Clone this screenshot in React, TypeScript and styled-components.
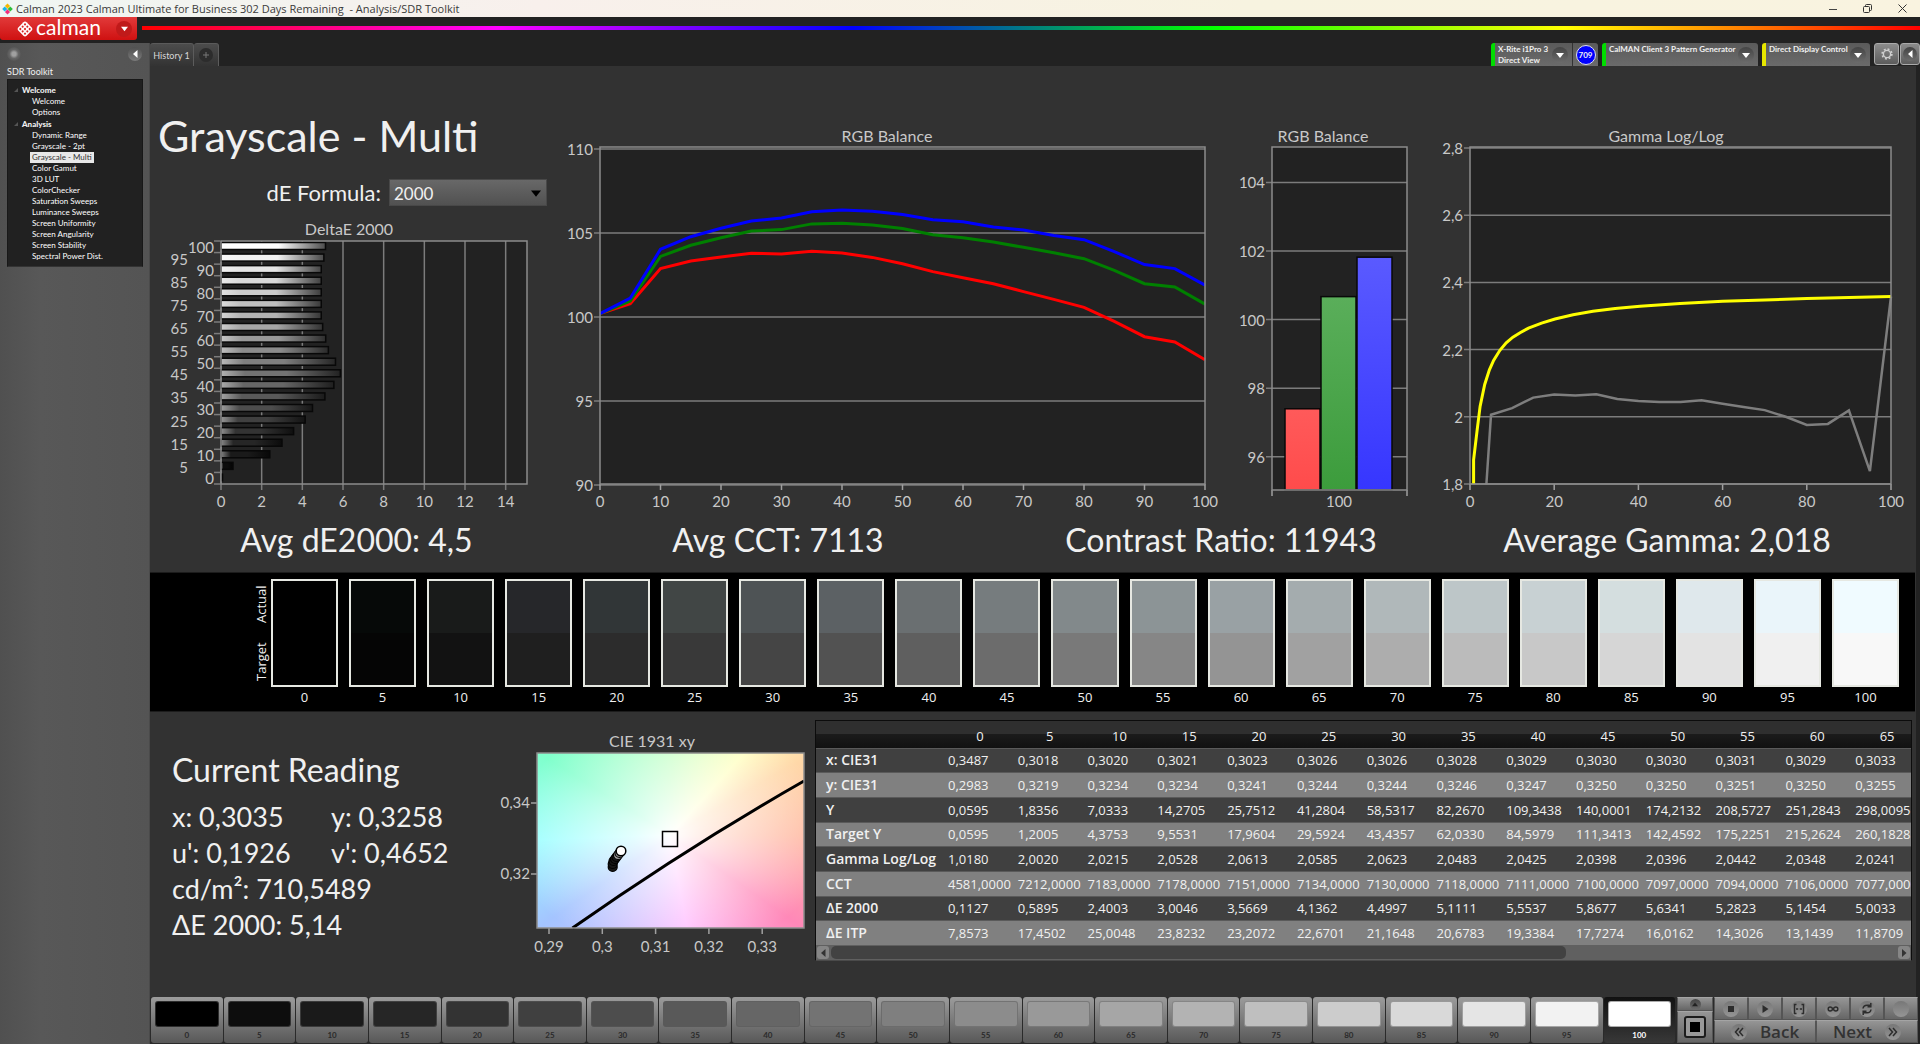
import React, { useState } from "react";
import styled, { createGlobalStyle } from "styled-components";

const HUMANIST = `Lato, "Liberation Sans", sans-serif`;
const SYSTEM = `"Open Sans", "Liberation Sans", sans-serif`;

const GlobalStyle = createGlobalStyle`
  *, *::before, *::after { box-sizing: border-box; }
  body { margin: 0; background: #222; font-family: ${HUMANIST}; color: #f0f0f0; }
  button, select { font: inherit; color: inherit; margin: 0; padding: 0; border: 0; }
`;

/* ---------- data ---------- */

const LEVELS = Array.from({ length: 21 }, (_, i) => i * 5);

const DELTA_E = [
  0.11, 0.59, 2.4, 3.0, 3.57, 4.14, 4.5, 5.11, 5.55, 5.87, 5.63, 5.28, 5.15, 5.0, 4.93, 4.93, 4.93, 4.93,
  4.93, 5.06, 5.14,
];

const BALANCE = {
  red: [
    100.2, 100.79, 102.88, 103.33, 103.57, 103.79, 103.75, 103.91, 103.81, 103.55, 103.17, 102.7, 102.34,
    101.98, 101.51, 101.05, 100.58, 99.74, 98.83, 98.51, 97.46,
  ],
  green: [
    100.2, 100.95, 103.61, 104.27, 104.72, 105.12, 105.2, 105.54, 105.58, 105.48, 105.26, 104.9, 104.72,
    104.46, 104.15, 103.83, 103.47, 102.78, 101.98, 101.79, 100.77,
  ],
  blue: [
    100.2, 101.13, 104.03, 104.78, 105.28, 105.71, 105.89, 106.27, 106.37, 106.29, 106.11, 105.79, 105.67,
    105.36, 105.18, 104.86, 104.6, 103.89, 103.12, 102.88, 101.9,
  ],
};

const GAMMA_TARGET: [number, number][] = [
  [0.85, 1.8], [0.85, 1.872], [1.7, 1.962], [2.4, 2.031], [3.5, 2.096], [4.6, 2.14], [5.6, 2.168],
  [7.1, 2.198], [8.6, 2.22], [10.2, 2.237], [12, 2.251], [13.9, 2.264], [17, 2.279], [20.2, 2.291],
  [24.5, 2.304], [29.2, 2.314], [34.5, 2.322], [40.4, 2.329], [49.9, 2.337], [60, 2.344], [70, 2.348],
  [80, 2.352], [90, 2.355], [100, 2.358],
];

const GAMMA_ACTUAL: [number, number][] = [
  [3.9, 1.8], [5, 2.006], [10, 2.026], [15, 2.057], [20, 2.066], [25, 2.063], [30, 2.067], [35, 2.053],
  [40, 2.047], [45, 2.044], [50, 2.044], [55, 2.049], [60, 2.039], [65, 2.029], [70, 2.02], [75, 2.0],
  [80, 1.976], [85, 1.979], [90, 2.019], [95, 1.838], [100, 2.358],
];

const ACTUAL = [
  "#000000", "#060908", "#191b1a", "#26272a", "#313637", "#414645", "#4e5355", "#5c6164", "#6a6f71",
  "#767c7e", "#82898b", "#8c9496", "#99a1a4", "#a4acae", "#b0b8ba", "#bdc6c8", "#c8d1d3", "#d4dedf",
  "#dfe8ec", "#eaf5fa", "#f0fbff",
];

const TARGET = [
  "#000000", "#050505", "#121212", "#1f1f1f", "#2c2c2c", "#393939", "#454545", "#525252", "#5f5f5f",
  "#6c6c6c", "#797979", "#868686", "#949494", "#a1a1a1", "#adadad", "#bbbbbb", "#c8c8c8", "#d6d6d6",
  "#e3e3e3", "#f0f0f0", "#f8f8f8",
];

const TABLE: [string, string][] = [
  ["x: CIE31", "0,3487 0,3018 0,3020 0,3021 0,3023 0,3026 0,3026 0,3028 0,3029 0,3030 0,3030 0,3031 0,3029 0,3033"],
  ["y: CIE31", "0,2983 0,3219 0,3234 0,3234 0,3241 0,3244 0,3244 0,3246 0,3247 0,3250 0,3250 0,3251 0,3250 0,3255"],
  ["Y", "0,0595 1,8356 7,0333 14,2705 25,7512 41,2804 58,5317 82,2670 109,3438 140,0001 174,2132 208,5727 251,2843 298,0095"],
  ["Target Y", "0,0595 1,2005 4,3753 9,5531 17,9604 29,5924 43,4357 62,0330 84,5979 111,3413 142,4592 175,2251 215,2624 260,1828"],
  ["Gamma Log/Log", "1,0180 2,0020 2,0215 2,0528 2,0613 2,0585 2,0623 2,0483 2,0425 2,0398 2,0396 2,0442 2,0348 2,0241"],
  ["CCT", "4581,0000 7212,0000 7183,0000 7178,0000 7151,0000 7134,0000 7130,0000 7118,0000 7111,0000 7100,0000 7097,0000 7094,0000 7106,0000 7077,0000"],
  ["ΔE 2000", "0,1127 0,5895 2,4003 3,0046 3,5669 4,1362 4,4997 5,1111 5,5537 5,8677 5,6341 5,2823 5,1454 5,0033"],
  ["ΔE ITP", "7,8573 17,4502 25,0048 23,8232 23,2072 22,6701 21,1648 20,6783 19,3384 17,7274 16,0162 14,3026 13,1439 11,8709"],
];

const TREE = [
  { title: "Welcome", items: ["Welcome", "Options"] },
  {
    title: "Analysis",
    items: [
      "Dynamic Range", "Grayscale - 2pt", "Grayscale - Multi", "Color Gamut", "3D LUT", "ColorChecker",
      "Saturation Sweeps", "Luminance Sweeps", "Screen Uniformity", "Screen Angularity",
      "Screen Stability", "Spectral Power Dist.",
    ],
  },
];

/* ---------- shell ---------- */

const Window = styled.div`
  min-height: 100vh;
  display: flex;
  flex-direction: column;
  background: #222;
`;

const TitleBar = styled.div`
  height: 17px;
  display: flex;
  align-items: center;
  padding-left: 2px;
  background: linear-gradient(90deg, #eff6f2 0%, #f8f0ec 28%, #f7f3e0 65%, #f9f3e0 100%);
  color: #3a3a3a;
  font: 11px/16px ${SYSTEM};
`;

const TitleText = styled.span`
  flex: 1;
  padding-left: 3px;
  white-space: pre;
`;

const WindowButton = styled.button`
  width: 35px;
  height: 17px;
  display: grid;
  place-items: center;
  background: none;
`;

const Banner = styled.header`
  height: 26px;
  display: flex;
  align-items: flex-start;
  gap: 5px;
`;

const Brand = styled.button`
  width: 137px;
  height: 23px;
  display: flex;
  align-items: center;
  gap: 2px;
  padding: 0 5px 0 16px;
  border-radius: 0 0 3px 3px;
  background: linear-gradient(#e23a3a, #cf1111);
  color: #fff;
`;

const BrandName = styled.span`
  flex: 1;
  text-align: left;
  font-size: 21px;
  line-height: 20px;
  padding-bottom: 4px;
`;

const Spectrum = styled.div`
  flex: 1;
  height: 4px;
  margin-top: 9px;
  background: linear-gradient(90deg, #f00, #f0f 20%, #00f 40%, #0f0 60%, #ff0 80%, #f00);
`;

const Body = styled.div`
  flex: 1;
  display: flex;
`;

const Round = styled.span<{ $size: number; $tone?: string; $ring?: boolean }>`
  flex: none;
  width: ${(p) => p.$size}px;
  height: ${(p) => p.$size}px;
  border: ${(p) => (p.$ring ? "1px solid #dde" : "0")};
  border-radius: 50%;
  display: grid;
  place-items: center;
  background: ${(p) => p.$tone ?? "linear-gradient(#444, #6c6c6c)"};
`;

/* ---------- sidebar ---------- */

const Sidebar = styled.aside`
  flex: none;
  width: 150px;
  padding: 0 7px;
  background: linear-gradient(90deg, #505050, #585858 40px, #545454);
  border-right: 1px solid #4a4a4a;
`;

const SidebarTop = styled.div`
  display: flex;
  justify-content: space-between;
  align-items: center;
  height: 22px;
`;

const IconButton = styled.button`
  background: none;
  display: grid;
  place-items: center;
`;

const SidebarTitle = styled.h2`
  margin: 0;
  font-size: 9px;
  font-weight: 400;
  line-height: 14px;
`;

const Tree = styled.nav`
  margin-right: -1px;
  padding: 4px 0;
  background: #212121;
  border: 1px solid #181818;
  border-bottom-color: #333;
`;

const Branch = styled.h3`
  margin: 0;
  display: flex;
  align-items: center;
  gap: 3px;
  padding-left: 5px;
  font-size: 8px;
  font-weight: 900;
  line-height: 12px;
`;

const Leaf = styled.a<{ $active: boolean }>`
  display: block;
  width: fit-content;
  margin-left: 22px;
  padding: 0 2px;
  font-size: 8px;
  line-height: 11px;
  text-decoration: none;
  color: ${(p) => (p.$active ? "#333" : "#fff")};
  background: ${(p) => (p.$active ? "#e8e8e8" : "none")};
`;

/* ---------- tabs and devices ---------- */

const Content = styled.div`
  flex: 1;
  min-width: 0;
  display: flex;
  flex-direction: column;
`;

const Toolbar = styled.div`
  height: 23px;
  display: flex;
  justify-content: space-between;
`;

const Tabs = styled.div`
  display: flex;
`;

const Tab = styled.button<{ $width: number }>`
  width: ${(p) => p.$width}px;
  height: 23px;
  display: grid;
  place-items: center;
  background: linear-gradient(#4c4c4c, #333);
  border-top: 1px solid #5a5a5a;
  border-right: 1px solid #5c5c5c;
  border-radius: 3px 3px 0 0;
  font-size: 9px;
  white-space: nowrap;
  color: #d8d8d8;
`;

const Devices = styled.div`
  display: flex;
  gap: 4px;
`;

const Device = styled.div<{ $accent: string; $width: number }>`
  width: ${(p) => p.$width}px;
  height: 23px;
  display: flex;
  border-left: 4px solid ${(p) => p.$accent};
  border-radius: 3px 3px 0 0;
  background: linear-gradient(#5a5a5a, #6b6b6b);
`;

const DeviceMenu = styled.button`
  flex: 1;
  display: flex;
  align-items: center;
  justify-content: space-between;
  padding: 0 4px 0 3px;
  background: none;
  text-align: left;
`;

const DeviceName = styled.span`
  align-self: flex-start;
  padding-top: 1px;
  font-size: 8px;
  font-weight: 700;
  line-height: 11px;
  white-space: pre;
`;

const Gamut = styled.button`
  width: 26px;
  display: grid;
  place-items: center;
  border-left: 1px solid #333;
  background: none;
  font-size: 8px;
  font-weight: 700;
`;

const ToolButtons = styled.div`
  display: flex;
  gap: 1px;
`;

const ToolButton = styled.button<{ $width: number }>`
  width: ${(p) => p.$width}px;
  height: 22px;
  display: grid;
  place-items: center;
  border: 1px solid #aaa;
  border-radius: 3px;
  background: linear-gradient(#8c8c8c, #5c5c5c);
`;

/* ---------- main ---------- */

const Main = styled.main`
  flex: 1;
  display: flex;
  flex-direction: column;
  margin-right: 4px;
  background: #323232;
`;

const Charts = styled.section`
  display: grid;
  grid-template-columns: 420fr 670fr 202fr 474fr;
  align-items: end;
`;

const Heading = styled.h1`
  margin: 0;
  padding: 40px 0 0 8px;
  font-size: 43px;
  font-weight: 400;
  line-height: 60px;
`;

const FormulaRow = styled.div`
  display: flex;
  align-items: center;
  justify-content: flex-end;
  gap: 8px;
  padding: 13px 23px 10px 0;
  font-size: 22px;
  line-height: 27px;
`;

const SelectBox = styled.div`
  display: grid;
  width: 158px;
  height: 27px;
  align-items: center;

  > * { grid-area: 1 / 1; }
  > svg { justify-self: end; margin-right: 6px; pointer-events: none; }
`;

const Select = styled.select`
  appearance: none;
  width: 100%;
  height: 27px;
  padding: 2px 4px 0;
  border: 1px solid #484848;
  background: linear-gradient(#686868, #515151);
  font-size: 17px;
  line-height: 23px;
`;

const Chart = styled.svg`
  display: block;
  width: 100%;
  height: auto;
  overflow: visible;
  font-family: ${HUMANIST};
  font-size: 15px;
  fill: #c8c8c8;
`;

const ChartTitle = styled.text`
  font-size: 16px;
  text-anchor: middle;
`;

const Stats = styled.section`
  display: grid;
  grid-template-columns: 413fr 430fr 456fr 436fr;
  padding: 0 31px 7px 0;
  font-size: 32px;
  line-height: 51px;
  text-align: center;
`;

const Strip = styled.section`
  display: flex;
  height: 140px;
  margin-right: 1px;
  padding: 6px 16px 0 101px;
  background: #000;
  border: solid #1c1c1c;
  border-width: 1px 0;
`;

const StripAxis = styled.div`
  flex: none;
  width: 20px;
  height: 108px;
  display: flex;
  justify-content: space-between;
  padding: 6px 0;
  writing-mode: vertical-rl;
  transform: rotate(180deg);
  font: 13px/20px ${SYSTEM};
`;

const Swatches = styled.div`
  flex: 1;
  display: flex;
  gap: 11px;
`;

const Swatch = styled.figure`
  flex: 1;
  margin: 0;
  text-align: center;
  font: 13px/20px ${SYSTEM};
`;

const SwatchColor = styled.div<{ $top: string; $bottom: string }>`
  height: 108px;
  border: 2px solid #e6e8e2;
  background: linear-gradient(${(p) => p.$top} 50%, ${(p) => p.$bottom} 50%);
`;

const Lower = styled.section`
  display: grid;
  grid-template-columns: minmax(0, 351fr) minmax(0, 311fr) minmax(0, 1104fr);
  align-items: start;
`;

const Reading = styled.div`
  padding: 37px 0 0 22px;
`;

const ReadingTitle = styled.h2`
  margin: 0;
  font-size: 32px;
  font-weight: 400;
  line-height: 42px;
`;

const ReadingGrid = styled.div`
  display: grid;
  grid-template-columns: 159px auto;
  padding-top: 8px;
  font-size: 27px;
  line-height: 36px;
  white-space: nowrap;
`;

const ChartSlot = styled.div`
  padding-top: 17px;
`;

const PlaneFill = styled.div`
  width: 100%;
  height: 100%;
  background:
    radial-gradient(ellipse 160px 120px at 50% 47%, #fff, rgba(255, 255, 255, 0.75) 22%, rgba(255, 255, 255, 0) 100%),
    conic-gradient(
      from 0deg at 50% 47%,
      #c4ffc4 0deg, #ffffc0 42deg, #ffd8a8 60deg, #ffb8a0 90deg, #ff88b8 125deg, #ffbcff 170deg,
      #a4c4ff 235deg, #98ffff 268deg, #80ffcc 302deg, #c4ffc4 360deg
    );
`;

const TablePanel = styled.div`
  margin: 8px 4px 0 3px;
  border: 1px solid #0c0c0c;
  border-bottom-color: #4a4a4a;
`;

const TableScroll = styled.div`
  overflow: hidden;
`;

const DataTable = styled.table`
  width: 1106px;
  table-layout: fixed;
  border-collapse: collapse;
  font: 13px/24px ${SYSTEM};
  text-align: left;
  white-space: nowrap;

  th, td { padding: 0 0 0 3px; }
  thead tr { height: 27px; }
  thead th {
    padding: 2px 0 0;
    text-align: center;
    font-weight: 400;
  }
  thead th:first-child { width: 129px; }
  thead { background: linear-gradient(#2f2f2f 50%, #1b1b1b 50%, #111); }
  tbody th { padding-left: 10px; font-size: 14px; font-weight: 600; }
  tbody tr { height: 25px; background: #404040; box-shadow: inset 0 1px #5a5a5a; }
  tbody tr:nth-child(3n + 1) { height: 24px; }
  tbody tr:nth-child(even) { background: #808080; }
`;

const ScrollBar = styled.div`
  height: 15px;
  display: flex;
  align-items: center;
  justify-content: space-between;
  gap: 2px;
  padding: 1px;
  background: #606060;
`;

const ScrollTrack = styled.div`
  flex: 1;
  height: 13px;
`;

const ScrollThumb = styled.div`
  width: 69%;
  height: 13px;
  border-radius: 5px;
  background: #424242;
`;

const ScrollButton = styled.button`
  width: 12px;
  height: 13px;
  display: grid;
  place-items: center;
  border-radius: 3px;
  background: #868686;
`;

/* ---------- bottom bar ---------- */

const BottomBar = styled.footer`
  display: flex;
  height: 47px;
  margin-top: auto;
  margin-right: -2px;
  background: #2a2a2a;
`;

const Patches = styled.div`
  flex: 1;
  display: flex;
  gap: 1px;
  padding: 0 2px 1px 1px;
`;

const Patch = styled.button<{ $active: boolean }>`
  flex: 1;
  display: flex;
  flex-direction: column;
  padding: 4px 4px 0;
  border-radius: 3px;
  background: ${(p) => (p.$active ? "linear-gradient(#111, #383838)" : "linear-gradient(#9c9c9c, #585858)")};
  color: ${(p) => (p.$active ? "#fff" : "#2a2a2a")};
  font-size: 8px;
  font-weight: 700;
  line-height: 16px;
  text-align: center;
`;

const PatchColor = styled.span<{ $color: string }>`
  width: 100%;
  height: 28px;
  border: 1px solid rgba(90, 90, 90, 0.5);
  border-radius: 3px;
  background: ${(p) => p.$color};
`;

const PatchLabel = styled.span`
  width: 100%;
`;

const StackColumn = styled.div`
  width: 36px;
  margin-right: 1px;
  padding-bottom: 1px;
  display: flex;
  flex-direction: column;
`;

const BarButton = styled.button<{ $height: number }>`
  flex: 1 1 0;
  height: ${(p) => p.$height}px;
  flex-basis: ${(p) => p.$height}px;
  display: flex;
  align-items: center;
  justify-content: center;
  gap: 13px;
  border: 1px solid #555;
  border-top-color: #a4a4a4;
  background: linear-gradient(#959595, #666);
  color: #333;
  font: 600 17px/21px ${SYSTEM};
`;

const Transport = styled.div`
  width: 204px;
  padding-bottom: 1px;
  display: flex;
  flex-direction: column;
`;

const TransportRow = styled.div`
  flex: 1;
  display: flex;
`;

/* ---------- small drawings ---------- */

const Caret = ({ dir = "down", size = 8, color = "#fff" }: { dir?: "down" | "up" | "left" | "right"; size?: number; color?: string }) => {
  const d = { down: "M0 2h8L4 7z", up: "M0 7h8L4 2z", left: "M6.500 0v8L2 4z", right: "M2 0v8l4.500-4z" }[dir];
  return (
    <svg width={size} height={size} viewBox="0 0 8 8" aria-hidden="true">
      <path d={d} fill={color} />
    </svg>
  );
};

const AppIcon = () => (
  <svg width="11" height="12" viewBox="0 0 12 12" aria-hidden="true">
    <path d="M6 0l2.800 2.800L6 5.600 3.200 2.800z" fill="#f5b800" />
    <path d="M3 3.200L5.800 6 3 8.800.2 6z" fill="#19b5e8" />
    <path d="M9 3.200L11.800 6 9 8.800 6.200 6z" fill="#2dbf3a" />
    <path d="M6 6.400l2.800 2.800L6 12 3.200 9.200z" fill="#ee2f7b" />
  </svg>
);

const BrandMark = () => {
  const dots = [-1, 0, 1].flatMap((a) => [-1, 0, 1].map((b) => [10 + (a - b) * 2.6, 10 + (a + b) * 2.6]));
  return (
    <svg width="18" height="20" viewBox="0 0 20 20" aria-hidden="true">
      <rect x="3.500" y="3.500" width="13" height="13" rx="2.500" transform="rotate(45 10 10)" fill="#fff" />
      {dots.map(([x, y]) => (
        <rect key={`${x}-${y}`} x={x - 1.1} y={y - 1.1} width="2.200" height="2.200" rx=".8" transform={`rotate(45 ${x} ${y})`} fill="#d92525" />
      ))}
    </svg>
  );
};

const Gear = () => (
  <svg width="14" height="14" viewBox="0 0 14 14" fill="none" stroke="#d0d0d0" aria-hidden="true">
    <circle cx="7" cy="7" r="3.600" strokeWidth="1.400" />
    <circle cx="7" cy="7" r="4.900" strokeWidth="1.600" strokeDasharray="1.900 1.950" />
  </svg>
);

const Glyph = ({ kind }: { kind: string }) => (
  <svg width="12" height="12" viewBox="0 0 12 12" fill="none" stroke="#2c2c2c" strokeWidth="1.500" aria-hidden="true">
    {kind === "Stop" && <rect x="3" y="3" width="6" height="6" fill="#2c2c2c" stroke="none" />}
    {kind === "Play" && <path d="M3.500 2l6 4-6 4z" fill="#2c2c2c" stroke="none" />}
    {kind === "Read series" && <path d="M3.500 1.500h-2v9h2M8.500 1.500h2v9h-2M3 6h2.200M6.800 6H9" />}
    {kind === "Continuous" && <path d="M6 6C5 4.500 4.200 4 3.200 4a2 2 0 000 4C4.200 8 5 7.500 6 6s1.800-2 2.800-2a2 2 0 010 4C7.800 8 7 7.500 6 6z" />}
    {kind === "Refresh" && <path d="M2 5.500C2.300 3.500 4 2.200 6 2.200h3M9.800 0v3.800H6.500M10 6.500c-.3 2-2 3.300-4 3.300H3M2.200 12V8.200h3.300" />}
    {kind === "Back" && <path d="M6 2L2.500 6 6 10M10 2L6.500 6 10 10" />}
    {kind === "Next" && <path d="M2 2l3.500 4L2 10M6 2l3.500 4L6 10" />}
  </svg>
);

/* ---------- charts ---------- */

const GRID = "#7c7c7c";

const line = (points: [number, number][]) => points.map(([x, y]) => `${x.toFixed(1)},${y.toFixed(1)}`).join(" ");

const DeltaChart = () => {
  const left = 71;
  const top = 25;
  const step = 243 / 21;
  const unit = 305 / 15;
  return (
    <Chart viewBox="0 0 420 298" role="img" aria-label="DeltaE 2000">
      <defs>
        {LEVELS.map((l) => {
          const c = l * 2.55;
          const g = (v: number) => `rgb(${[v, v, v].map(Math.round).join(",")})`;
          return (
            <linearGradient id={`bar${l}`} key={l}>
              <stop offset="0" stopColor={g(c + (255 - c) * 0.45)} />
              <stop offset=".2" stopColor={g(c)} />
              <stop offset=".55" stopColor={g(c)} />
              <stop offset="1" stopColor={g(c * 0.3)} />
            </linearGradient>
          );
        })}
      </defs>
      <ChartTitle x="199" y="19">DeltaE 2000</ChartTitle>
      <rect x={left} y={top} width="306" height="243" fill="#222" />
      {[0, 2, 4, 6, 8, 10, 12, 14].map((v) => (
        <g key={v}>
          <path d={`M${left + v * unit} ${top}V${top + 249}`} stroke={GRID} strokeWidth="1.500" />
          <text x={left + v * unit} y="291" textAnchor="middle">{v}</text>
        </g>
      ))}
      {LEVELS.map((l, i) => {
        const y = top + (20 - i) * step;
        const w = DELTA_E[i] * unit;
        return (
          <g key={l}>
            <path d={`M${left - 7} ${y}h6`} stroke={GRID} strokeWidth="1.500" />
            {w > 4 && <rect x={left} y={y + 1.5} width={w} height="7" fill={`url(#bar${l})`} stroke="#080808" strokeWidth="1.500" />}
            {w <= 4 && <rect x={left} y={y + 1} width={w} height="8" fill="#080808" />}
            <text x={l % 10 ? 38 : 64} y={y + 12} textAnchor="end">{l}</text>
          </g>
        );
      })}
      <path d={`M${left - 7} ${top + 243}h6`} stroke={GRID} strokeWidth="1.500" />
      <rect x={left} y={top} width="306" height="243" fill="none" stroke="#8c8c8c" strokeWidth="1.500" />
    </Chart>
  );
};

interface PlotProps {
  width: number;
  title: string;
  titleX: number;
  left: number;
  right: number;
  bottom: number;
  rows: { y: number; label: string }[];
  cols: { x: number; label: string }[];
  ticks: number[];
  children: React.ReactNode;
}

const Plot = ({ width, title, titleX, left, right, bottom, rows, cols, ticks, children }: PlotProps) => (
  <Chart viewBox={`0 0 ${width} 388`} role="img" aria-label={title}>
    <ChartTitle x={titleX} y="16">{title}</ChartTitle>
    <rect x={left} y="21" width={right - left} height={bottom - 21} fill="#222" />
    {rows.map((r) => (
      <g key={r.label}>
        <path d={`M${left - 6} ${r.y}H${right}`} stroke={GRID} strokeWidth="1.500" />
        <text x={left - 7} y={r.y + 6} textAnchor="end">{r.label}</text>
      </g>
    ))}
    {ticks.map((x) => (
      <path key={x} d={`M${x} ${bottom}v6`} stroke="#a0a0a0" strokeWidth="1.500" />
    ))}
    {cols.map((c) => (
      <text key={c.label} x={c.x} y="381" textAnchor="middle">{c.label}</text>
    ))}
    {children}
    <rect x={left} y="21" width={right - left} height={bottom - 21} fill="none" stroke="#8c8c8c" strokeWidth="1.500" />
  </Chart>
);

const BalanceChart = () => {
  const px = (v: number) => 30 + v * 6.05;
  const py = (v: number) => 191 - (v - 100) * 16.8;
  const xs = Array.from({ length: 11 }, (_, i) => i * 10);
  return (
    <Plot
      width={670} title="RGB Balance" titleX={317} left={30} right={635} bottom={358}
      rows={[110, 105, 100, 95, 90].map((v) => ({ y: py(v), label: String(v) }))}
      cols={xs.map((v) => ({ x: px(v), label: String(v) }))}
      ticks={xs.map(px)}
    >
      {([["#f00", BALANCE.red], ["#008000", BALANCE.green], ["#00f", BALANCE.blue]] as const).map(([color, values]) => (
        <polyline key={color} points={line(values.map((v, i) => [px(i * 5), py(v)]))} fill="none" stroke={color} strokeWidth="3" />
      ))}
    </Plot>
  );
};

const LevelChart = () => {
  const py = (v: number) => 193.6 - (v - 100) * 34.3;
  const bars = [
    { x: 45, value: 97.4, from: "#ff5a5a", to: "#ff4b4b" },
    { x: 81, value: 100.67, from: "#5aae5a", to: "#3c9c3c" },
    { x: 117, value: 101.82, from: "#5a5aff", to: "#3636ff" },
  ];
  return (
    <Plot
      width={202} title="RGB Balance" titleX={83} left={32} right={167} bottom={364}
      rows={[104, 102, 100, 98, 96].map((v) => ({ y: py(v), label: String(v) }))}
      cols={[{ x: 99, label: "100" }]}
      ticks={[32, 167]}
    >
      {bars.map((b, i) => (
        <g key={b.x}>
          <defs>
            <linearGradient id={`level${i}`} x2="0" y2="1">
              <stop stopColor={b.from} />
              <stop offset="1" stopColor={b.to} />
            </linearGradient>
          </defs>
          <rect x={b.x} y={py(b.value)} width="35" height={364 - py(b.value)} fill={`url(#level${i})`} stroke="#080808" strokeWidth="1.500" />
        </g>
      ))}
    </Plot>
  );
};

const GammaChart = () => {
  const px = (v: number) => 28 + v * 4.21;
  const py = (v: number) => 358 - (v - 1.8) * 336;
  const xs = [0, 20, 40, 60, 80, 100];
  return (
    <Plot
      width={474} title="Gamma Log/Log" titleX={224} left={28} right={449} bottom={358}
      rows={[2.8, 2.6, 2.4, 2.2, 2, 1.8].map((v) => ({ y: py(v), label: String(v).replace(".", ",") }))}
      cols={xs.map((v) => ({ x: px(v), label: String(v) }))}
      ticks={xs.map(px)}
    >
      <polyline points={line(GAMMA_ACTUAL.map(([x, y]) => [px(x), py(y)]))} fill="none" stroke="#7e7e7e" strokeWidth="2.500" />
      <polyline points={line(GAMMA_TARGET.map(([x, y]) => [px(x), py(y)]))} fill="none" stroke="#ff0" strokeWidth="3" />
    </Plot>
  );
};

const CieChart = () => (
  <Chart viewBox="0 0 311 230" role="img" aria-label="CIE 1931 xy">
    <ChartTitle x="151" y="18">CIE 1931 xy</ChartTitle>
    <foreignObject x="36" y="24" width="267" height="175">
      <PlaneFill />
    </foreignObject>
    {[["0,34", 74], ["0,32", 145]].map(([label, y]) => (
      <g key={label}>
        <path d={`M30 ${y}h6`} stroke="#a0a0a0" strokeWidth="1.500" />
        <text x="29" y={Number(y) + 5} textAnchor="end">{label}</text>
      </g>
    ))}
    {["0,29", "0,3", "0,31", "0,32", "0,33"].map((label, i) => (
      <g key={label}>
        <path d={`M${48 + i * 53.3} 199v6`} stroke="#a0a0a0" strokeWidth="1.500" />
        <text x={48 + i * 53.3} y="223" textAnchor="middle">{label}</text>
      </g>
    ))}
    <path d="M71.500 199Q187 118 303 52" fill="none" stroke="#000" strokeWidth="3" />
    <rect x="161.500" y="102.500" width="15" height="15" fill="none" stroke="#000" strokeWidth="1.500" />
    {[[111.700, 138], [111.700, 135], [112.500, 132], [114, 130], [115.500, 128], [117, 126], [118.500, 124]].map(([x, y]) => (
      <circle key={y} cx={x} cy={y} r="4.500" fill={y > 127 ? "#161616" : "#999"} stroke="#000" strokeWidth="1.200" />
    ))}
    <circle cx="120" cy="122" r="4.800" fill="#fff" stroke="#000" strokeWidth="1.500" />
    <rect x="36" y="24" width="267" height="175" fill="none" stroke="#8c8c8c" strokeWidth="1.500" />
  </Chart>
);

/* ---------- page ---------- */

export default function App() {
  const [page, setPage] = useState("Grayscale - Multi");
  const [level, setLevel] = useState(100);

  return (
    <Window>
      <GlobalStyle />
      <TitleBar>
        <AppIcon />
        <TitleText>{"Calman 2023 Calman Ultimate for Business 302 Days Remaining  - Analysis/SDR Toolkit"}</TitleText>
        <WindowButton aria-label="Minimize">
          <svg width="8" height="8"><path d="M0 4.500h8" stroke="#444" /></svg>
        </WindowButton>
        <WindowButton aria-label="Restore">
          <svg width="9" height="9" fill="none" stroke="#333"><rect x=".5" y="2.500" width="6" height="6" rx="1" /><path d="M2.500 2.500V1.500q0-1 1-1h4q1 0 1 1v4q0 1-1 1h-1" /></svg>
        </WindowButton>
        <WindowButton aria-label="Close">
          <svg width="9" height="9"><path d="M.5.5l8 8M8.500.5l-8 8" stroke="#333" /></svg>
        </WindowButton>
      </TitleBar>

      <Banner>
        <Brand aria-label="calman menu">
          <BrandMark />
          <BrandName>calman</BrandName>
          <Round $size={16} $tone="#c01a1a"><Caret size={7} /></Round>
        </Brand>
        <Spectrum />
      </Banner>

      <Body>
        <Sidebar>
          <SidebarTop>
            <IconButton aria-label="Pin">
              <Round $size={14} $tone="radial-gradient(#a0a0a0 20%, #666 45%, #444)" />
            </IconButton>
            <IconButton aria-label="Collapse">
              <Round $size={14} $tone="linear-gradient(#505050, #7a7a7a)"><Caret dir="left" /></Round>
            </IconButton>
          </SidebarTop>
          <SidebarTitle>SDR Toolkit</SidebarTitle>
          <Tree>
            {TREE.map((branch) => (
              <React.Fragment key={branch.title}>
                <Branch>
                  <svg width="6" height="6" aria-hidden="true"><path d="M5 1v4H1z" fill="#555" /></svg>
                  {branch.title}
                </Branch>
                {branch.items.map((item) => (
                  <Leaf key={item} href="#" $active={item === page} onClick={() => setPage(item)}>{item}</Leaf>
                ))}
              </React.Fragment>
            ))}
          </Tree>
        </Sidebar>

        <Content>
          <Toolbar>
            <Tabs>
              <Tab $width={44}>History 1</Tab>
              <Tab $width={25} aria-label="Add history">
                <Round $size={14} $tone="#2c2c2c">
                  <svg width="6" height="6"><path d="M3 0v6M0 3h6" stroke="#777" /></svg>
                </Round>
              </Tab>
            </Tabs>
            <Devices>
              <Device $accent="#0d0" $width={107}>
                <DeviceMenu><DeviceName>{"X-Rite i1Pro 3\nDirect View"}</DeviceName><Round $size={16}><Caret /></Round></DeviceMenu>
                <Gamut><Round $size={20} $tone="#00f" $ring>709</Round></Gamut>
              </Device>
              <Device $accent="#0d0" $width={156}>
                <DeviceMenu><DeviceName>CalMAN Client 3 Pattern Generator</DeviceName><Round $size={16}><Caret /></Round></DeviceMenu>
              </Device>
              <Device $accent="#e6e600" $width={108}>
                <DeviceMenu><DeviceName>Direct Display Control</DeviceName><Round $size={16}><Caret /></Round></DeviceMenu>
              </Device>
              <ToolButtons>
                <ToolButton $width={25} aria-label="Settings"><Gear /></ToolButton>
                <ToolButton $width={20} aria-label="Collapse devices"><Round $size={14}><Caret dir="left" /></Round></ToolButton>
              </ToolButtons>
            </Devices>
          </Toolbar>

          <Main>
            <Charts>
              <div>
                <Heading>Grayscale - Multi</Heading>
                <FormulaRow>
                  <label htmlFor="formula">dE Formula:</label>
                  <SelectBox>
                    <Select id="formula" defaultValue="2000"><option>2000</option><option>ITP</option></Select>
                    <Caret size={10} color="#000" />
                  </SelectBox>
                </FormulaRow>
                <DeltaChart />
              </div>
              <BalanceChart />
              <LevelChart />
              <GammaChart />
            </Charts>

            <Stats>
              <span>Avg dE2000: 4,5</span>
              <span>Avg CCT: 7113</span>
              <span>Contrast Ratio: 11943</span>
              <span>Average Gamma: 2,018</span>
            </Stats>

            <Strip>
              <StripAxis><span>Target</span><span>Actual</span></StripAxis>
              <Swatches>
                {LEVELS.map((l, i) => (
                  <Swatch key={l}>
                    <SwatchColor $top={ACTUAL[i]} $bottom={TARGET[i]} />
                    <figcaption>{l}</figcaption>
                  </Swatch>
                ))}
              </Swatches>
            </Strip>

            <Lower>
              <Reading>
                <ReadingTitle>Current Reading</ReadingTitle>
                <ReadingGrid>
                  <span>x: 0,3035</span><span>y: 0,3258</span>
                  <span>u': 0,1926</span><span>v': 0,4652</span>
                  <span>cd/m²: 710,5489</span><span />
                  <span>ΔE 2000: 5,14</span>
                </ReadingGrid>
              </Reading>
              <ChartSlot><CieChart /></ChartSlot>
              <TablePanel>
                <TableScroll>
                  <DataTable>
                    <thead>
                      <tr><th aria-label="Measure" />{LEVELS.slice(0, 14).map((l) => <th key={l} scope="col">{l}</th>)}</tr>
                    </thead>
                    <tbody>
                      {TABLE.map(([name, values]) => (
                        <tr key={name}>
                          <th scope="row">{name}</th>
                          {values.split(" ").map((v, i) => <td key={i}>{v}</td>)}
                        </tr>
                      ))}
                    </tbody>
                  </DataTable>
                </TableScroll>
                <ScrollBar>
                  <ScrollButton aria-label="Scroll left"><Caret dir="left" color="#333" /></ScrollButton>
                  <ScrollTrack><ScrollThumb /></ScrollTrack>
                  <ScrollButton aria-label="Scroll right"><Caret dir="right" color="#333" /></ScrollButton>
                </ScrollBar>
              </TablePanel>
            </Lower>

            <BottomBar>
              <Patches>
                {LEVELS.map((l) => {
                  const c = Math.round(l * 2.55);
                  return (
                    <Patch key={l} $active={l === level} onClick={() => setLevel(l)}>
                      <PatchColor $color={`rgb(${c}, ${c}, ${c})`} />
                      <PatchLabel>{l}</PatchLabel>
                    </Patch>
                  );
                })}
              </Patches>
              <StackColumn>
                <BarButton $height={14} aria-label="Expand">
                  <Round $size={11}><Caret dir="up" size={6} color="#222" /></Round>
                </BarButton>
                <BarButton $height={32} aria-label="Current patch">
                  <svg width="22" height="22"><rect x="1" y="1" width="20" height="20" rx="2" fill="#999" stroke="#1c1c1c" strokeWidth="2" /><rect x="6" y="6" width="10" height="10" fill="#000" /></svg>
                </BarButton>
              </StackColumn>
              <Transport>
                <TransportRow>
                  {["Stop", "Play", "Read series", "Continuous", "Refresh", "Idle"].map((k) => (
                    <BarButton key={k} $height={23} aria-label={k}>
                      <Round $size={16} $tone="linear-gradient(#777, #959595)"><Glyph kind={k} /></Round>
                    </BarButton>
                  ))}
                </TransportRow>
                <TransportRow>
                  <BarButton $height={23}><Round $size={16} $tone="linear-gradient(#777, #959595)"><Glyph kind="Back" /></Round>Back</BarButton>
                  <BarButton $height={23}>Next<Round $size={16} $tone="linear-gradient(#777, #959595)"><Glyph kind="Next" /></Round></BarButton>
                </TransportRow>
              </Transport>
            </BottomBar>
          </Main>
        </Content>
      </Body>
    </Window>
  );
}
